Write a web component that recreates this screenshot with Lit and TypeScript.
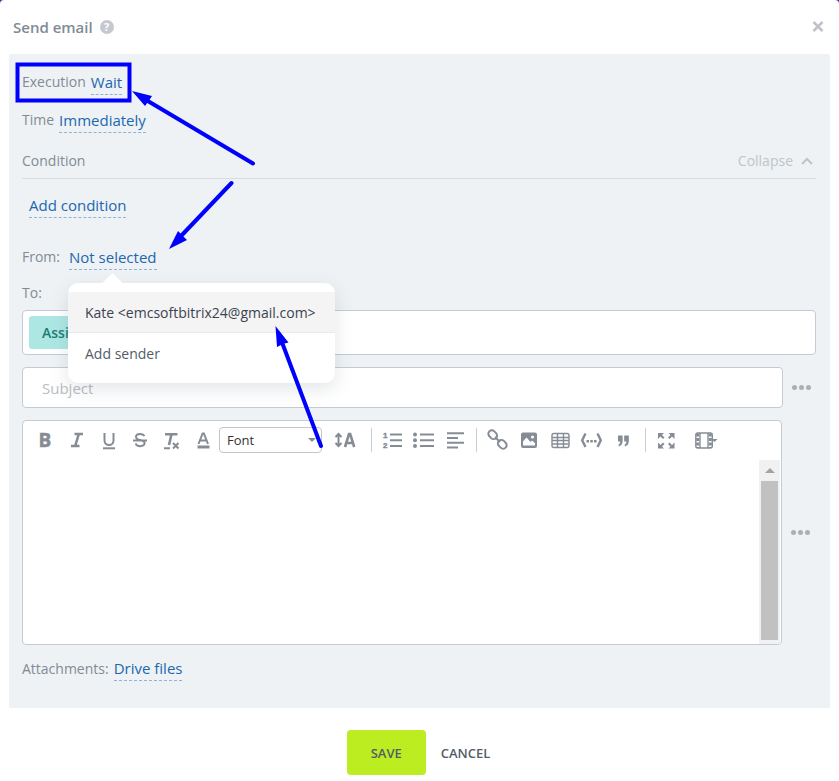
import { LitElement, html, css, svg } from "lit";
import { customElement, property } from "lit/decorators.js";

const icons: Record<string, unknown> = {
  bold: svg`<text class="glyph" x="12" y="19" text-anchor="middle">B</text>`,
  italic: svg`<path class="line thick" d="M9.5 6H18M6 18H14.5M13.8 6L10.2 18"/>`,
  underline: svg`<path class="line" d="M8.5 5V12.500a4.500 4.500 0 0 0 9 0V5"/><path class="line" d="M7 20.300H19"/>`,
  strike: svg`<path class="line" d="M16.3 8.2C15.6 6.6 14 6 12.1 6 9.6 6 8 7.2 8 8.9c0 4.2 8.6 2.2 8.6 6.2 0 2-2 3.1-4.5 3.1-2.2 0-3.9-.9-4.5-2.7M5 12.5H19"/>`,
  clear: svg`<path class="line thick" d="M5 6.2H17.500M11.500 6.200L9 17"/><path class="line" d="M4 20.300H10M13 15L18.500 20.500M18.500 15L13 20.500"/>`,
  color: svg`<path class="line" d="M7.500 16L11.600 5.500H12.900L17 16M9 12.500H15.500"/><path class="fill" d="M6.500 17.500h12v3H6.500z"/>`,
  size: svg`<path class="line" d="M5.500 6.500V17.500M2.500 9L5.500 6L8.500 9M2.500 15L5.500 18L8.500 15"/><path class="line thick" d="M12 19L16 6H17.200L21.200 19M13.500 15H19.800"/>`,
  ordered: svg`<text class="num" x="2" y="10">1</text><text class="num" x="2" y="20">2</text><path class="line" d="M9 6.500H21M9 12.300H21M9 18H21"/>`,
  bullets: svg`<path class="line" d="M8 6.500H22M8 12.300H22M8 18H22"/><circle class="fill" cx="3" cy="6.500" r="2"/><circle class="fill" cx="3" cy="12.300" r="2"/><circle class="fill" cx="3" cy="18" r="2"/>`,
  align: svg`<path class="line" d="M4 5.200H21M4 10H15M4 14.800H21M4 19.500H15"/>`,
  link: svg`<g transform="rotate(45 11.500 11.500)"><rect class="line" x="0" y="8" width="9.500" height="7" rx="3.500"/><rect class="line" x="13.500" y="8" width="9.500" height="7" rx="3.500"/><path class="line" d="M8 11.500H15"/></g>`,
  image: svg`<path class="fill" fill-rule="evenodd" d="M6 4.500H18a2 2 0 0 1 2 2V18a2 2 0 0 1-2 2H6a2 2 0 0 1-2-2V6.500a2 2 0 0 1 2-2ZM6 17.500H18V15L15 12.500L13.500 14L9.500 9.500L6 13.500ZM15.500 7.500a1.500 1.500 0 1 0 0 3a1.500 1.500 0 0 0 0-3Z"/>`,
  table: svg`<rect class="line thin" x="3" y="5.500" width="17" height="14" rx="2"/><path class="line thin" d="M3 9.500H20M3 12.500H20M3 16H20M8.500 5.500V19.500M14.500 5.500V19.500"/>`,
  code: svg`<path class="line bracket" d="M5.500 5.500L2.200 12.300L5.500 19M17.500 5.500L20.800 12.300L17.500 19"/><path class="fill" d="M6.500 12h2.500v2.500H6.500zM10.300 12h2.500v2.500h-2.500zM14 12h2.500v2.500H14z"/>`,
  quote: svg`<path class="fill" d="M7 7.500h4.600v5.500c0 3-1.500 5-4 5.500v-2c1.200-.6 1.600-1.800 1.600-3H7zM13.200 7.500h4.600v5.500c0 3-1.500 5-4 5.500v-2c1.200-.6 1.600-1.800 1.600-3h-2.200z"/>`,
  expand: svg`<path class="fill" d="M4 5h6l-2 2 2.500 2.500-1.500 1.500-2.500-2.500L4 11zM20.500 5v6l-2.500-2.500L15.500 11l-1.500-1.500L16.500 7l-2-2zM4 20.500v-6l2.500 2.500L9 14.500l1.500 1.500L8 18.500l2 2zM20.500 20.500h-6l2-2-2.500-2.500L15.500 14.500l2.500 2.500L20.500 14.500z"/>`,
  video: svg`<rect class="line thin" x="1.800" y="5" width="16.500" height="15" rx="2"/><path class="line thin" d="M6 5V20M14 5V20"/><path class="line film" d="M3.700 5.500V20M16.300 5.500V20"/><path class="fill" d="M17.500 11h6l-3 3z"/>`,
};

@customElement("tool-button")
class ToolButton extends LitElement {
  @property() icon = "";
  @property() label = "";

  static styles = css`
    :host { display: flex; justify-content: center; }
    .tool { display: block; width: 24px; height: 24px; padding: 0; border: 0; background: none; cursor: pointer; }
    .art { display: block; width: 24px; height: 24px; overflow: visible; }
    .line { fill: none; stroke: #868c96; stroke-width: 2; }
    .thick { stroke-width: 2.6; }
    .bracket { stroke-width: 2.4; }
    .thin { stroke-width: 1.4; }
    .film { stroke-width: 3; stroke-dasharray: 3 1.5; }
    .fill { fill: #868c96; }
    .glyph { font: 700 19px "Open Sans", sans-serif; fill: #868c96; stroke: #868c96; stroke-width: 0.5; }
    .num { font: 700 8px "Liberation Sans", sans-serif; fill: #868c96; stroke: #868c96; stroke-width: 0.4; }
  `;

  render() {
    return html`<button class="tool" type="button" aria-label=${this.label}>
      <svg class="art" viewBox="0 0 24 24" aria-hidden="true">${icons[this.icon]}</svg>
    </button>`;
  }
}

const tool = (icon: string, label: string) =>
  html`<tool-button class="cell" icon=${icon} label=${label}></tool-button>`;

@customElement("app-root")
class AppRoot extends LitElement {
  static styles = css`
    :host {
      display: block;
      min-height: 100vh;
      background: #3a3490;
      font-family: "Open Sans", "Noto Sans", sans-serif;
      font-size: 14px;
      line-height: 20px;
      color: #828b95;
    }
    *, *::before, *::after { box-sizing: border-box; }
    button, input, select, textarea { font: inherit; color: inherit; }
    button { padding: 0; border: 0; background: none; cursor: pointer; }
    .dialog { position: relative; min-height: 100vh; background: #fff; border-radius: 4px 4px 0 0; }
    .head { display: flex; align-items: center; height: 54px; padding: 0 15px 0 13px; gap: 7px; }
    .title { margin: 0; font-size: 15px; font-weight: 600; }
    .help { width: 14px; height: 14px; border-radius: 50%; background: #c5c9cf; color: #fff; font-size: 11px; line-height: 14px; font-weight: 700; }
    .close { margin-left: auto; width: 12px; height: 12px; }
    .close-art, .chev { display: block; fill: none; stroke: #bfc3c8; stroke-width: 2; }
    .panel { margin: 0 9px; padding: 9px 14px 16px 13px; background: #eef2f4; border-radius: 2px; }
    .row { display: flex; align-items: center; gap: 5px; height: 38px; }
    .tall { height: 52px; }
    .indent { padding-left: 7px; }
    .from { gap: 9px; }
    .pick {
      display: block; font-size: 15px; line-height: 24px; color: #2067b0; text-decoration: none;
      border-bottom: 1px dashed #8fb3d6;
    }
    .section { display: flex; justify-content: space-between; align-items: center; height: 40px; padding-top: 4px; border-bottom: 1px solid #d9dde2; }
    .collapse { display: flex; align-items: center; gap: 8px; padding-right: 3px; color: #c0c4c9; }
    .to { display: block; height: 27px; }
    .box { background: #fff; border: 1px solid #c3cbd4; border-radius: 4px; }
    .recipients { display: flex; height: 45px; padding: 5px 6px; margin-bottom: 12px; }
    .token { width: 96px; padding-left: 13px; background: #ade7e4; color: #217d74; border-radius: 3px; line-height: 34px; font-weight: 600; }
    .with-more { display: flex; align-items: center; margin-bottom: 12px; }
    .subject { flex: 1; min-width: 0; height: 41px; padding: 0 19px; font-size: 15px; }
    .subject::placeholder { color: #b9bdc2; opacity: 1; }
    .more { display: flex; justify-content: center; gap: 2px; width: 33px; padding-left: 3px; }
    .editor { flex: 1; min-width: 0; height: 225px; display: flex; flex-direction: column; }
    .dot { width: 5px; height: 5px; border-radius: 50%; background: #abb0b5; }
    .flush { margin-bottom: 0; padding-right: 1px; }
    .bar { display: flex; align-items: center; height: 37px; margin-bottom: 2px; padding-left: 6px; }
    .group { display: flex; }
    .cell { flex: 1; }
    .text-tools { width: 190px; }
    .size-tool, .one { display: flex; width: 46px; }
    .one { width: 32px; margin-left: 4px; }
    .film-tool { display: flex; width: 24px; margin-left: 12px; }
    .list-tools { width: 94px; margin: 0 5px; }
    .insert-tools { width: 157px; margin: 0 6px 0 5px; }
    .rule { width: 1px; height: 24px; background: #c9cdd2; }
    .rule-first { margin-left: 3px; }
    .font-wrap { position: relative; width: 103px; }
    .font { display: block; width: 100%; height: 26px; padding: 0 7px; appearance: none; background: #fff; border: 1px solid #c3c5c8; border-radius: 4px; color: #333; font-size: 13px; }
    .caret { position: absolute; right: 6px; top: 11px; border: 4px solid transparent; border-top-color: #868c96; border-bottom: 0; }
    .body { display: flex; flex: 1; }
    .area { flex: 1; min-width: 0; border: 0; padding: 10px; resize: none; overflow: hidden; background: none; outline: 0; }
    .scroll { width: 21px; margin-right: 1px; padding: 0 2px 4px; background: #f1f1f1; display: flex; flex-direction: column; align-items: center; }
    .up { margin: 8px 0; border: 5px solid transparent; border-bottom-color: #a3a3a3; border-top: 0; }
    .thumb { flex: 1; align-self: stretch; background: #c1c1c1; }
    .files { height: 47px; }
    .anchor { position: relative; }
    .menu { position: absolute; z-index: 2; left: -1px; top: 38px; width: 267px; padding: 9px 0; background: #fff; border-radius: 10px; box-shadow: 0 6px 18px rgba(80, 92, 105, 0.16); }
    .menu::before { content: ""; position: absolute; left: 37px; top: -7px; width: 15px; height: 15px; background: #fff; transform: rotate(45deg); }
    .option { position: relative; display: block; width: 100%; height: 41px; padding: 2px 17px 0; text-align: left; white-space: nowrap; color: #535c69; }
    .active { background: #f4f4f4; border-bottom: 1px solid #e9eaeb; color: #3c4350; }
    .foot { display: flex; justify-content: center; gap: 15px; padding: 22px 2px 6px 0; font-size: 13px; color: #535c69; }
    .save { width: 79px; height: 45px; border-radius: 4px; background: #bbed21; font-weight: 600; }
    .cancel { font-weight: 600; }
    .marks { position: absolute; z-index: 3; left: 0; top: 0; width: 400px; height: 460px; pointer-events: none; }
    .stroke { fill: none; stroke: #0000ff; stroke-width: 4; stroke-linecap: round; }
    .tip { fill: #0000ff; }
  `;

  render() {
    const dots = html`<span class="dot"></span><span class="dot"></span><span class="dot"></span>`;
    return html`
      <main class="dialog">
        <header class="head">
          <h1 class="title">Send email</h1>
          <button class="help" type="button" aria-label="Help">?</button>
          <button class="close" type="button" aria-label="Close">
            <svg class="close-art" width="12" height="12"><path d="M1.500 1L10.500 10M10.500 1L1.500 10" stroke-width="2.500"/></svg>
          </button>
        </header>
        <form class="panel">
          <div class="row"><span>Execution</span><a class="pick" href="#execution">Wait</a></div>
          <div class="row"><span>Time</span><a class="pick" href="#time">Immediately</a></div>
          <div class="section">
            <span>Condition</span>
            <button class="collapse" type="button">Collapse
              <svg class="chev" width="12" height="8"><path d="M1 7L6 2L11 7"/></svg>
            </button>
          </div>
          <div class="row tall indent"><a class="pick" href="#condition">Add condition</a></div>
          <div class="row tall from">
            <span>From:</span>
            <div class="anchor">
              <a class="pick" href="#sender" aria-haspopup="menu">Not selected</a>
              <div class="menu" role="menu">
                <button class="option active" type="button" role="menuitem">Kate &lt;emcsoftbitrix24@gmail.com&gt;</button>
                <button class="option" type="button" role="menuitem">Add sender</button>
              </div>
            </div>
          </div>
          <span class="to">To:</span>
          <div class="box recipients"><span class="token">Assi</span></div>
          <div class="with-more">
            <input class="box subject" type="text" placeholder="Subject" aria-label="Subject" />
            <button class="more" type="button" aria-label="Insert value in subject">${dots}</button>
          </div>
          <div class="with-more flush">
            <div class="box editor">
              <div class="bar" role="toolbar">
                <div class="group text-tools">
                  ${tool("bold", "Bold")}${tool("italic", "Italic")}${tool("underline", "Underline")}
                  ${tool("strike", "Strikethrough")}${tool("clear", "Clear formatting")}${tool("color", "Text color")}
                </div>
                <div class="font-wrap">
                  <select class="font" aria-label="Font"><option>Font</option></select>
                  <span class="caret"></span>
                </div>
                <div class="size-tool">${tool("size", "Text size")}</div>
                <span class="rule rule-first"></span>
                <div class="group list-tools">
                  ${tool("ordered", "Numbered list")}${tool("bullets", "Bulleted list")}${tool("align", "Align")}
                </div>
                <span class="rule"></span>
                <div class="group insert-tools">
                  ${tool("link", "Link")}${tool("image", "Image")}${tool("table", "Table")}
                  ${tool("code", "Code")}${tool("quote", "Quote")}
                </div>
                <span class="rule"></span>
                <div class="one">${tool("expand", "Full screen")}</div>
                <div class="film-tool">${tool("video", "Video")}</div>
              </div>
              <div class="body">
                <textarea class="area" aria-label="Message"></textarea>
                <div class="scroll" aria-hidden="true"><span class="up"></span><span class="thumb"></span></div>
              </div>
            </div>
            <button class="more" type="button" aria-label="Insert value in message">${dots}</button>
          </div>
          <div class="row files"><span>Attachments:</span><a class="pick" href="#files">Drive files</a></div>
        </form>
        <footer class="foot">
          <button class="save" type="button">SAVE</button>
          <button class="cancel" type="button">CANCEL</button>
        </footer>
        <svg class="marks" viewBox="0 0 400 460" aria-hidden="true">
          <rect class="stroke" x="17.500" y="64.500" width="112" height="36"/>
          <path class="stroke" d="M253 163.500L147 100.500M231.500 183L182 235M321 446L283 345"/>
          <path class="tip" d="M132 91L152 96L149 100.500L145 106ZM169 249L178 231L182 235L187 240ZM275.500 326L288.500 342.500L283 344L277 347Z"/>
        </svg>
      </main>
    `;
  }
}
